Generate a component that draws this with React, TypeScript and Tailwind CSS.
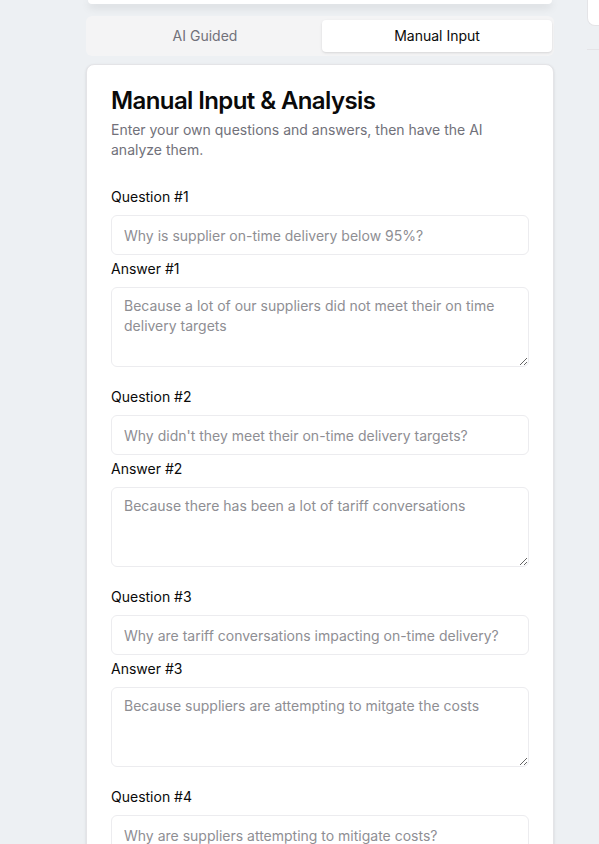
import { useState } from 'react';

interface Step {
  question: string;
  answer?: string;
}

const steps: Step[] = [
  {
    question: 'Why is supplier on-time delivery below 95%?',
    answer: 'Because a lot of our suppliers did not meet their on time delivery targets',
  },
  {
    question: "Why didn't they meet their on-time delivery targets?",
    answer: 'Because there has been a lot of tariff conversations',
  },
  {
    question: 'Why are tariff conversations impacting on-time delivery?',
    answer: 'Because suppliers are attempting to mitgate the costs',
  },
  {
    question: 'Why are suppliers attempting to mitigate costs?',
    answer: '',
  },
];

export default function App() {
  const [tab, setTab] = useState<'ai' | 'manual'>('manual');

  return (
    <div
      className="min-h-screen w-full overflow-hidden bg-[#edf0f3] text-[#0a0a0a]"
      style={{ fontFamily: 'Inter, "Noto Sans", sans-serif' }}
    >
      <div className="flex">
        <div className="ml-[86px] w-[468px] shrink-0">
          <div className="mx-[2px] h-[4px] rounded-b-xl bg-white shadow-[0_3px_8px_rgba(0,0,0,0.14)]" />

          <div className="mt-[12px] grid h-10 grid-cols-2 gap-0.5 rounded-md bg-[#f4f4f5] py-1 pl-1 pr-0.5">
            <button
              onClick={() => setTab('ai')}
              className={`rounded text-sm ${tab === 'ai' ? 'bg-white text-[#0a0a0a] shadow-sm' : 'text-[#71717a]'}`}
            >
              AI Guided
            </button>
            <button
              onClick={() => setTab('manual')}
              className={`rounded text-sm ${tab === 'manual' ? 'bg-white text-[#0a0a0a] shadow-sm' : 'text-[#71717a]'}`}
            >
              Manual Input
            </button>
          </div>

          <div className="mt-2 rounded-lg border border-[#e4e4e7] bg-white p-6 shadow-sm">
            <h2 className="text-2xl font-semibold leading-none tracking-tight">Manual Input &amp; Analysis</h2>
            <p className="mt-[7px] text-sm leading-5 text-[#71717a]">
              Enter your own questions and answers, then have the AI analyze them.
            </p>

            <div className="mt-[27px] flex flex-col gap-5">
              {steps.map((step, i) => (
                <div key={i}>
                  <label className="block text-sm leading-5">Question #{i + 1}</label>
                  <input
                    placeholder={step.question}
                    className="mt-2 h-10 w-full rounded-md border border-[#ececef] px-3 text-sm placeholder:text-[#8e8e93] focus:outline-none"
                  />
                  <label className="mt-1 block text-sm leading-5">Answer #{i + 1}</label>
                  <textarea
                    placeholder={step.answer}
                    className="mt-2 block h-20 w-full rounded-md border border-[#ececef] px-3 py-2 text-sm leading-5 placeholder:text-[#8e8e93] focus:outline-none"
                  />
                </div>
              ))}
            </div>
          </div>
        </div>

        <div className="ml-[33px] flex-1">
          <div className="h-[26px] rounded-bl-lg border-b border-l border-[#e4e4e7] bg-white" />
          <div className="mt-[23px] h-px bg-[#e4e4e7]" />
        </div>
      </div>
    </div>
  );
}
